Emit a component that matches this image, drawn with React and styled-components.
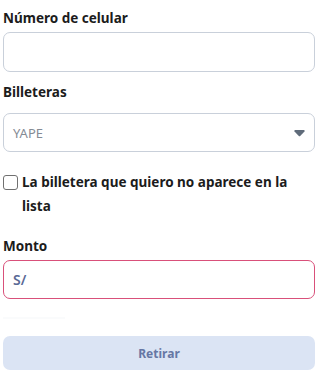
import styled, { createGlobalStyle } from "styled-components";

const GlobalStyle = createGlobalStyle`
	body {
		margin: 0;
		background: #ffffff;
		font-family: "Noto Sans", "Open Sans", sans-serif;
	}
`;

const App = () => {
	return (
		<>
			<GlobalStyle />
			<Form>
				<Field>
					<Label>Número de celular</Label>
					<Input type="text" />
				</Field>

				<Field $gap={12}>
					<Label $gap={12}>Billeteras</Label>
					<SelectBox>
						<span>YAPE</span>
						<svg width="11" height="8" viewBox="0 0 11 8">
							<path
								d="M1.2 1h8.6c.8 0 1.2.9.7 1.5L6.2 7c-.4.4-1 .4-1.4 0L.5 2.5C0 1.9.4 1 1.2 1z"
								fill="#5f6b7a"
							/>
						</svg>
					</SelectBox>
				</Field>

				<CheckRow>
					<Box />
					<CheckText>La billetera que quiero no aparece en la lista</CheckText>
				</CheckRow>

				<Field>
					<Label>Monto</Label>
					<AmountInput>
						<Prefix>S/</Prefix>
					</AmountInput>
					<Hint />
				</Field>

				<Button disabled>Retirar</Button>
			</Form>
		</>
	);
};

const Form = styled.div`
	display: flex;
	flex-direction: column;
	padding: 9px 3px 0 3px;
`;

const Field = styled.div`
	display: flex;
	flex-direction: column;
	margin-bottom: ${(p) => (p.$gap ? 18 : 11)}px;
`;

const Label = styled.label`
	font-size: 13.5px;
	font-weight: 700;
	color: #1c1c1c;
	line-height: 18px;
	margin-bottom: ${(p) => p.$gap || 5}px;
`;

const Input = styled.input`
	box-sizing: border-box;
	height: 40px;
	width: 100%;
	border: 1px solid #c9d0da;
	border-radius: 7px;
	outline: none;
	padding: 0 9px;
`;

const SelectBox = styled.div`
	box-sizing: border-box;
	height: 39px;
	border: 1px solid #c9d0da;
	border-radius: 7px;
	display: flex;
	align-items: center;
	justify-content: space-between;
	padding: 0 9px;
	font-size: 13px;
	color: #858b94;
`;

const CheckRow = styled.div`
	display: flex;
	align-items: flex-start;
	gap: 4px;
	margin-bottom: 19px;
`;

const Box = styled.div`
	flex: none;
	box-sizing: border-box;
	width: 15px;
	height: 15px;
	margin-top: 5px;
	border: 1px solid #707070;
	border-radius: 3px;
	background: #fff;
`;

const CheckText = styled.span`
	font-size: 13.5px;
	font-weight: 700;
	color: #1c1c1c;
	line-height: 24px;
`;

const AmountInput = styled.div`
	box-sizing: border-box;
	height: 39px;
	border: 1.5px solid #d9507a;
	border-radius: 7px;
	display: flex;
	align-items: center;
	padding: 0 9px;
`;

const Prefix = styled.span`
	font-size: 14px;
	font-weight: 600;
	color: #5a6a96;
`;

const Hint = styled.div`
	width: 62px;
	height: 2px;
	margin-top: 18px;
	background: #fafbfc;
`;

const Button = styled.button`
	height: 34px;
	border: none;
	border-radius: 7px;
	background: #dbe4f4;
	color: #6677a4;
	font-family: inherit;
	font-size: 12px;
	font-weight: 700;
	margin-top: 6px;
`;

export default App;
